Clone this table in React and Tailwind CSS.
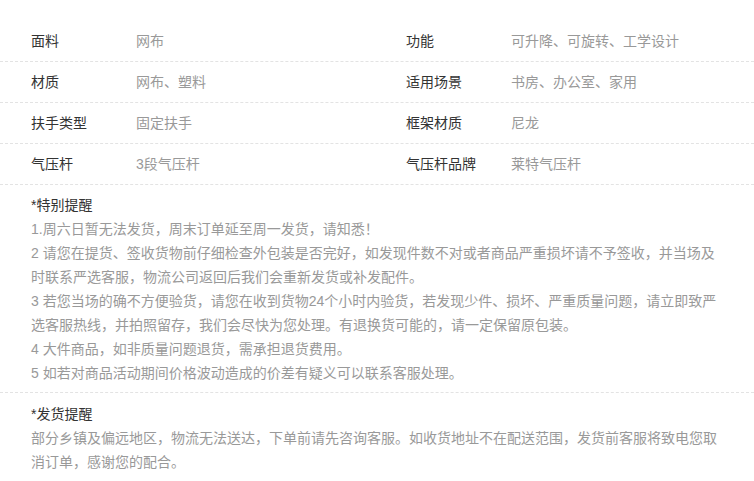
const specs = [
  ["面料", "网布", "功能", "可升降、可旋转、工学设计"],
  ["材质", "网布、塑料", "适用场景", "书房、办公室、家用"],
  ["扶手类型", "固定扶手", "框架材质", "尼龙"],
  ["气压杆", "3段气压杆", "气压杆品牌", "莱特气压杆"],
];

const notices = [
  "1.周六日暂无法发货，周末订单延至周一发货，请知悉！",
  "2 请您在提货、签收货物前仔细检查外包装是否完好，如发现件数不对或者商品严重损坏请不予签收，并当场及时联系严选客服，物流公司返回后我们会重新发货或补发配件。",
  "3 若您当场的确不方便验货，请您在收到货物24个小时内验货，若发现少件、损坏、严重质量问题，请立即致严选客服热线，并拍照留存，我们会尽快为您处理。有退换货可能的，请一定保留原包装。",
  "4 大件商品，如非质量问题退货，需承担退货费用。",
  "5 如若对商品活动期间价格波动造成的价差有疑义可以联系客服处理。",
];

const Cell = ({ label, value, className = "" }) => (
  <div className={`flex items-center pl-[31px] ${className}`}>
    <span className="w-[105px] shrink-0 text-[#333]">{label}</span>
    <span className="text-[#999]">{value}</span>
  </div>
);

export default function App() {
  return (
    <div
      className="w-[754px] bg-white pt-[21px] text-[14px] leading-[24px]"
      style={{ fontFamily: '"Liberation Sans", "Noto Sans CJK SC", sans-serif' }}
    >
      {specs.map((row, i) => (
        <div key={i} className="flex h-[41px] border-b border-dashed border-[#e3e3e3]">
          <Cell label={row[0]} value={row[1]} className="w-[375px] shrink-0" />
          <Cell label={row[2]} value={row[3]} className="flex-1" />
        </div>
      ))}

      <div className="border-b border-dashed border-[#e3e3e3] pt-[8px] pb-[7px] pl-[31px] pr-[31px]">
        <p className="text-[#333]">*特别提醒</p>
        {notices.map((n, i) => (
          <p key={i} className="text-[#999]">{n}</p>
        ))}
      </div>

      <div className="pt-[9px] pl-[31px] pr-[31px]">
        <p className="text-[#333]">*发货提醒</p>
        <p className="text-[#999]">
          部分乡镇及偏远地区，物流无法送达，下单前请先咨询客服。如收货地址不在配送范围，发货前客服将致电您取消订单，感谢您的配合。
        </p>
      </div>
    </div>
  );
}
